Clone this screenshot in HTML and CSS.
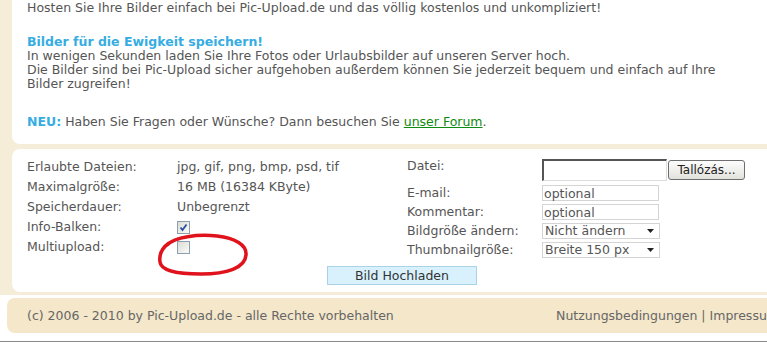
FILE: index.html
```html
<!DOCTYPE html>
<html lang="de">
<head>
    <meta charset="UTF-8">
    <meta name="viewport" content="width=device-width, initial-scale=1.0">
    <title>Pic-Upload.de</title>
    <link rel="stylesheet" href="styles.css">
</head>
<body>
    <div class="page">
        <div class="wrap">
            <div class="box intro">
                <p class="lead">Hosten Sie Ihre Bilder einfach bei Pic-Upload.de und das völlig kostenlos und unkompliziert!</p>
                <p class="info">
                    <strong class="blue">Bilder für die Ewigkeit speichern!</strong><br>
                    In wenigen Sekunden laden Sie Ihre Fotos oder Urlaubsbilder auf unseren Server hoch.<br>
                    Die Bilder sind bei Pic-Upload sicher aufgehoben außerdem können Sie jederzeit bequem und einfach auf Ihre Bilder zugreifen!
                </p>
                <p class="news"><strong class="blue">NEU:</strong> Haben Sie Fragen oder Wünsche? Dann besuchen Sie <a href="#">unser Forum</a>.</p>
            </div>

            <div class="box upload">
                <div class="form-grid">
                    <div class="facts">
                        <div class="row"><span class="label">Erlaubte Dateien:</span><span>jpg, gif, png, bmp, psd, tif</span></div>
                        <div class="row"><span class="label">Maximalgröße:</span><span>16 MB (16384 KByte)</span></div>
                        <div class="row"><span class="label">Speicherdauer:</span><span>Unbegrenzt</span></div>
                        <div class="row"><span class="label">Info-Balken:</span>
                            <span class="check">
                                <svg width="9" height="9" viewBox="0 0 9 9"><path d="M1.5 4.5 L3.5 7 L7.5 1.5" fill="none" stroke="#2a4fa0" stroke-width="1.8"/></svg>
                            </span>
                        </div>
                        <div class="row"><span class="label">Multiupload:</span><span class="check"></span></div>
                    </div>

                    <div class="fields">
                        <div class="field first"><span class="label">Datei:</span>
                            <span class="file-box"></span><span class="browse">Tallózás...</span>
                        </div>
                        <div class="field"><span class="label">E-mail:</span><span class="text-box">optional</span></div>
                        <div class="field"><span class="label">Kommentar:</span><span class="text-box">optional</span></div>
                        <div class="field"><span class="label">Bildgröße ändern:</span>
                            <span class="select">Nicht ändern<svg width="7" height="4" viewBox="0 0 7 4"><path d="M0 0 H7 L3.5 4 Z" fill="#222"/></svg></span>
                        </div>
                        <div class="field"><span class="label">Thumbnailgröße:</span>
                            <span class="select">Breite 150 px<svg width="7" height="4" viewBox="0 0 7 4"><path d="M0 0 H7 L3.5 4 Z" fill="#222"/></svg></span>
                        </div>
                    </div>
                </div>

                <div class="submit-row"><span class="submit">Bild Hochladen</span></div>

                <svg class="scribble" width="100" height="46" viewBox="0 0 100 46">
                    <path d="M10 12 C18 4 40 1 60 3 C78 5 90 12 89 22 C88 35 70 41 44 41 C20 41 4 38 3 29 C2 22 5 15 12 10" fill="none" stroke="#e0121c" stroke-width="3.5" stroke-linecap="round"/>
                </svg>
            </div>
        </div>

        <div class="footer">
            <span>(c) 2006 - 2010 by Pic-Upload.de - alle Rechte vorbehalten</span>
            <span>Nutzungsbedingungen | Impressum</span>
        </div>
        <div class="statusline"></div>
    </div>
</body>
</html>
```

FILE: styles.css
```css
html, body {
    margin: 0;
    height: 345px;
    overflow: hidden;
    background-color: #fff;
}
body {
    font-family: "DejaVu Sans", Verdana, sans-serif;
    font-size: 12.5px;
    line-height: 14px;
    color: #555;
}
.page {
    width: 830px;
}
.wrap {
    background-color: #f6edd9;
    padding: 0 0 3px 12px;
}
.box {
    background-color: #fff;
    position: relative;
}
.intro {
    border-radius: 0 0 0 8px;
    padding: 1px 15px 15px;
    margin-bottom: 5px;
}
.intro p {
    margin: 0;
    max-width: 700px;
}
.intro .info {
    margin-top: 20px;
}
.intro .news {
    margin-top: 24px;
}
.blue {
    color: #36ade2;
}
.intro a {
    color: #108a10;
    text-decoration: underline;
}
.upload {
    border-radius: 8px 0 0 8px;
    padding: 6px 15px 7px;
    height: 130px;
}
.form-grid {
    display: grid;
    grid-template-columns: 380px 1fr;
}
.facts {
    padding-top: 2px;
}
.facts .row {
    display: flex;
    align-items: center;
    height: 20px;
}
.facts .label {
    width: 150px;
}
.check {
    width: 11px;
    height: 11px;
    border: 1px solid #8e9eb0;
    background: linear-gradient(135deg, #dcdcd6, #fbfbf9);
    display: flex;
    align-items: center;
    justify-content: center;
}
.fields {
    padding-top: 4px;
}
.field {
    display: flex;
    align-items: center;
    margin-bottom: 3px;
}
.field.first {
    margin-bottom: 4px;
}
.field.first .label {
    align-self: flex-start;
}
.field .label {
    width: 135px;
}
.file-box {
    width: 122px;
    height: 19px;
    border-style: solid;
    border-width: 2px 1px 1px 2px;
    border-color: #555 #ddd #ddd #555;
    background-color: #fff;
}
.browse {
    width: 75px;
    height: 18px;
    margin-left: 1px;
    border: 1px solid #6e6e6e;
    border-radius: 3px;
    background: linear-gradient(#fdfdfd, #e2e2dc);
    color: #222;
    font-size: 12px;
    display: flex;
    align-items: center;
    justify-content: center;
}
.text-box {
    width: 113px;
    height: 14px;
    padding: 0 1px;
    border: 1px solid #d4d4d4;
    line-height: 15px;
}
.select {
    height: 14px;
    padding: 0 5px 0 2px;
    width: 109px;
    border: 1px solid #d4d4d4;
    display: flex;
    align-items: center;
    justify-content: space-between;
}
.submit-row {
    padding-left: 300px;
    margin-top: 5px;
}
.submit {
    display: inline-block;
    width: 148px;
    height: 17px;
    line-height: 17px;
    text-align: center;
    background-color: #d8f1fc;
    border: 1px solid #a9d3e6;
    color: #333;
}
.scribble {
    position: absolute;
    left: 145px;
    top: 84px;
}
.footer {
    margin: 3px 0 0 7px;
    height: 35px;
    width: 800px;
    box-sizing: border-box;
    padding: 0 28px 0 20px;
    background-color: #f4e7ca;
    border-radius: 8px;
    display: flex;
    align-items: center;
    justify-content: space-between;
    color: #666;
}
.statusline {
    margin-top: 8px;
    height: 1px;
    background-color: #8a8a8a;
}
```
